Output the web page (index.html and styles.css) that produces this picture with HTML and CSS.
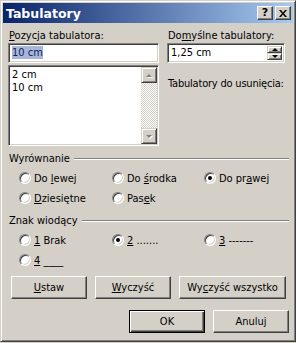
FILE: index.html
```html
<!DOCTYPE html>
<html lang="pl">
<head>
<meta charset="UTF-8">
<title>Tabulatory</title>
<link rel="stylesheet" href="styles.css">
</head>
<body>
  <div class="window">
    <div class="titlebar">
      <span class="title">Tabulatory</span>
      <div class="caption-btns">
        <span class="cbtn help">?</span>
        <span class="cbtn close">
          <svg width="8" height="7" viewBox="0 0 8 7"><path d="M0 0h2l2 2.5L6 0h2L5 3.5 8 7H6L4 4.5 2 7H0l3-3.5z" fill="#000"/></svg>
        </span>
      </div>
    </div>

    <div class="body">
      <div class="top">
        <div class="col">
          <div class="lbl"><u>P</u>ozycja tabulatora:</div>
          <div class="field"><span class="sel">10 cm</span></div>
          <div class="listbox">
            <div class="items">
              <div>2 cm</div>
              <div>10 cm</div>
            </div>
            <div class="vscroll">
              <span class="sbtn"><i class="arrow up dis"></i></span>
              <span class="track"></span>
              <span class="sbtn"><i class="arrow down dis"></i></span>
            </div>
          </div>
        </div>
        <div class="col">
          <div class="lbl">Do<u>m</u>yślne tabulatory:</div>
          <div class="field spin">
            <span>1,25 cm</span>
            <div class="spin-btns">
              <span class="sbtn"><i class="arrow up"></i></span>
              <span class="sbtn"><i class="arrow down"></i></span>
            </div>
          </div>
          <div class="lbl del">Tabulatory do usunięcia:</div>
        </div>
      </div>

      <div class="group">
        <div class="group-head"><span>Wyrównanie</span></div>
        <div class="radios">
          <div class="opt"><span class="radio"></span><span>Do <u>l</u>ewej</span></div>
          <div class="opt"><span class="radio"></span><span>Do <u>ś</u>rodka</span></div>
          <div class="opt"><span class="radio on"></span><span>Do pr<u>a</u>wej</span></div>
          <div class="opt"><span class="radio"></span><span><u>D</u>ziesiętne</span></div>
          <div class="opt"><span class="radio"></span><span>Pas<u>e</u>k</span></div>
        </div>
      </div>

      <div class="group">
        <div class="group-head"><span>Znak wiodący</span></div>
        <div class="radios">
          <div class="opt"><span class="radio"></span><span><u>1</u> Brak</span></div>
          <div class="opt"><span class="radio on"></span><span><u>2</u> .......</span></div>
          <div class="opt"><span class="radio"></span><span><u>3</u> -------</span></div>
          <div class="opt"><span class="radio"></span><span><u>4</u> ____</span></div>
        </div>
      </div>

      <div class="btn-row">
        <button class="btn"><u>U</u>staw</button>
        <button class="btn"><u>W</u>yczyść</button>
        <button class="btn wide">Wy<u>c</u>zyść wszystko</button>
      </div>
      <div class="btn-row end">
        <button class="btn default">OK</button>
        <button class="btn">Anuluj</button>
      </div>
    </div>
  </div>
</body>
</html>
```

FILE: styles.css
```css
body {
  margin: 0;
  font-family: 'DejaVu Sans Condensed', 'DejaVu Sans', sans-serif;
  font-size: 11px;
  color: #000;
  background: #d4d0c8;
}
u {
  text-decoration: underline;
  text-underline-offset: 1px;
}
.window {
  width: 296px;
  height: 342px;
  box-sizing: border-box;
  padding: 2px;
  background: #d4d0c8;
  border: 1px solid;
  border-color: #d4d0c8 #404040 #404040 #d4d0c8;
  box-shadow: inset 1px 1px #fff, inset -1px -1px #808080;
}
.titlebar {
  height: 20px;
  display: flex;
  align-items: center;
  justify-content: space-between;
  padding: 0 2px 0 3px;
  background: linear-gradient(90deg, #0a246a 0%, #a6caf0 100%);
}
.title {
  color: #fff;
  font-family: 'DejaVu Sans', sans-serif;
  font-weight: bold;
  font-size: 12.5px;
}
.caption-btns {
  display: flex;
  gap: 2px;
}
.cbtn {
  width: 16px;
  height: 14px;
  box-sizing: border-box;
  display: flex;
  align-items: center;
  justify-content: center;
  background: #d4d0c8;
  border: 1px solid;
  border-color: #fff #404040 #404040 #fff;
  box-shadow: inset -1px -1px #808080;
  font-family: 'DejaVu Sans', sans-serif;
  font-weight: bold;
  font-size: 11px;
  line-height: 12px;
}

.body {
  padding: 6px 4px 0 5px;
}
.top {
  display: grid;
  grid-template-columns: 151px 118px;
  column-gap: 8px;
}
.lbl {
  height: 14px;
  line-height: 13px;
  padding-left: 1px;
  white-space: nowrap;
}
.field {
  height: 20px;
  box-sizing: border-box;
  background: #fff;
  border: 1px solid;
  border-color: #808080 #fff #fff #808080;
  box-shadow: inset 1px 1px #404040, inset -1px -1px #d4d0c8;
  padding: 2px 3px;
  line-height: 14px;
}
.sel {
  background: #a9b6d6;
  color: #0a246a;
}
.listbox {
  margin-top: 2px;
  height: 81px;
  box-sizing: border-box;
  display: flex;
  background: #fff;
  border: 1px solid;
  border-color: #808080 #fff #fff #808080;
  box-shadow: inset 1px 1px #404040, inset -1px -1px #d4d0c8;
  padding: 1px;
}
.items {
  flex: 1;
  padding: 1px 2px;
  line-height: 13px;
}
.vscroll {
  width: 16px;
  display: flex;
  flex-direction: column;
}
.track {
  flex: 1;
  background: repeating-conic-gradient(#fff 0 25%, #d4d0c8 0 50%) 0 0 / 2px 2px;
}
.sbtn {
  height: 16px;
  box-sizing: border-box;
  display: flex;
  align-items: center;
  justify-content: center;
  background: #d4d0c8;
  border: 1px solid;
  border-color: #d4d0c8 #404040 #404040 #d4d0c8;
  box-shadow: inset 1px 1px #fff, inset -1px -1px #808080;
}
.arrow {
  width: 0;
  height: 0;
  border-left: 3px solid transparent;
  border-right: 3px solid transparent;
}
.arrow.up {
  border-bottom: 3px solid #000;
}
.arrow.down {
  border-top: 3px solid #000;
}
.arrow.dis.up {
  border-bottom-color: #808080;
  filter: drop-shadow(1px 1px 0 #fff);
}
.arrow.dis.down {
  border-top-color: #808080;
  filter: drop-shadow(1px 1px 0 #fff);
}
.spin {
  display: flex;
  justify-content: space-between;
  padding-right: 2px;
}
.spin-btns {
  display: flex;
  flex-direction: column;
  width: 15px;
}
.spin-btns .sbtn {
  height: 8px;
}
.lbl.del {
  margin-top: 14px;
  letter-spacing: -0.2px;
}

.group {
  margin-top: 6px;
}
.group-head {
  display: flex;
  align-items: center;
  gap: 4px;
  height: 13px;
  padding-left: 1px;
}
.group-head::after {
  content: "";
  flex: 1;
  height: 0;
  border-top: 1px solid #808080;
  border-bottom: 1px solid #fff;
}
.radios {
  display: grid;
  grid-template-columns: 93px 92px auto;
  grid-auto-rows: 20px;
  padding: 3px 0 0 11px;
}
.opt {
  display: flex;
  align-items: center;
  gap: 3px;
  white-space: nowrap;
}
.radio {
  width: 12px;
  height: 12px;
  box-sizing: border-box;
  border-radius: 50%;
  background: #fff;
  border: 1px solid;
  border-color: #808080 #fff #fff #808080;
  box-shadow: inset 1px 1px #404040, inset -1px -1px #d4d0c8;
  position: relative;
}
.radio.on::after {
  content: "";
  position: absolute;
  left: 3px;
  top: 3px;
  width: 4px;
  height: 4px;
  border-radius: 50%;
  background: #000;
}

.btn-row {
  display: flex;
  gap: 8px;
  padding-left: 3px;
  margin-top: 6px;
}
.btn-row.end {
  justify-content: flex-end;
  margin-top: 11px;
}
.btn {
  width: 76px;
  height: 23px;
  padding: 0;
  font: inherit;
  color: #000;
  background: #d4d0c8;
  border: 1px solid;
  border-color: #fff #404040 #404040 #fff;
  box-shadow: inset -1px -1px #808080;
}
.btn.wide {
  width: 107px;
}
.btn.default {
  border: 1px solid #000;
  box-shadow: inset 1px 1px #fff, inset -1px -1px #404040, inset -2px -2px #808080;
}
```
